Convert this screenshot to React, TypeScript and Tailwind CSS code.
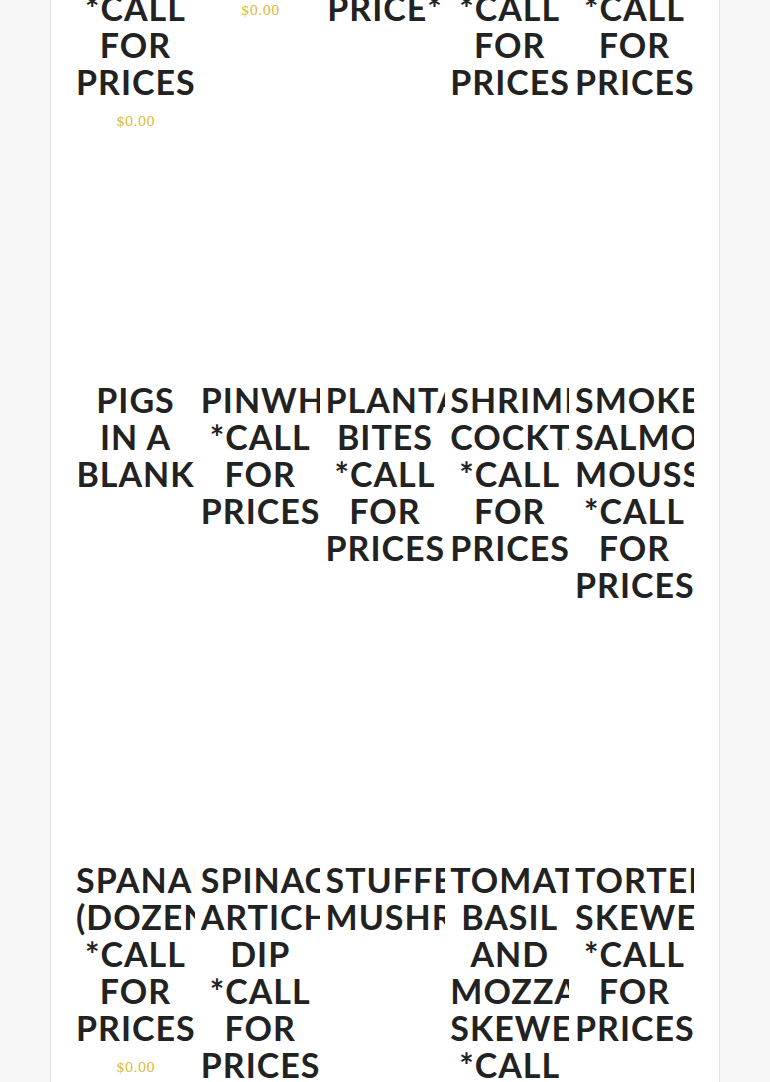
import React from "react";

type Item = { name: string; price?: boolean };

const rows: Item[][] = [
  [
    { name: "Mini Crab Cakes *Call for prices", price: true },
    { name: "Mini Quiche Assorted", price: true },
    { name: "Nachos *Call for price*" },
    { name: "Oyster Rockefeller Bites *Call for prices" },
    { name: "Pesto Chicken Crostini *Call for prices" },
  ],
  [
    { name: "Pigs in a Blank" },
    { name: "Pinwheels *Call for prices" },
    { name: "Plantain Bites *Call for prices" },
    { name: "Shrimp Cocktail *Call for prices" },
    { name: "Smoked Salmon Mousse *Call for prices" },
  ],
  [
    { name: "Spanakopita (Dozen) *Call for prices", price: true },
    { name: "Spinach Artichoke Dip *Call for prices" },
    { name: "Stuffed Mushrooms" },
    { name: "Tomato Basil and Mozzarella Skewers *Call for prices" },
    { name: "Tortellini Skewers *Call for prices" },
  ],
];

function Product({ item }: { item: Item }) {
  return (
    <li className="overflow-hidden text-center">
      <div className="h-[208px]" />
      <h2 className="font-['Lato',sans-serif] text-[34px] leading-[37px] font-bold uppercase tracking-[1px] text-[#222222]">
        {item.name}
      </h2>
      <div className="mt-[10px] font-['DejaVu_Serif',serif] text-[13.5px] leading-[23px] text-[#dbbc3b]">
        {item.price ? "$0.00" : null}
      </div>
    </li>
  );
}

export default function App() {
  return (
    <div className="min-h-screen overflow-hidden bg-[#f7f7f7]">
      <div className="ml-[50px] w-[670px] border-x border-[#e3e3e3] bg-white px-[25px]">
        <ul className="-mt-[330px] grid grid-cols-5 gap-x-[5.75px] gap-y-[40px] pb-10">
          {rows.flat().map((it, i) => (
            <Product key={i} item={it} />
          ))}
        </ul>
      </div>
    </div>
  );
}
